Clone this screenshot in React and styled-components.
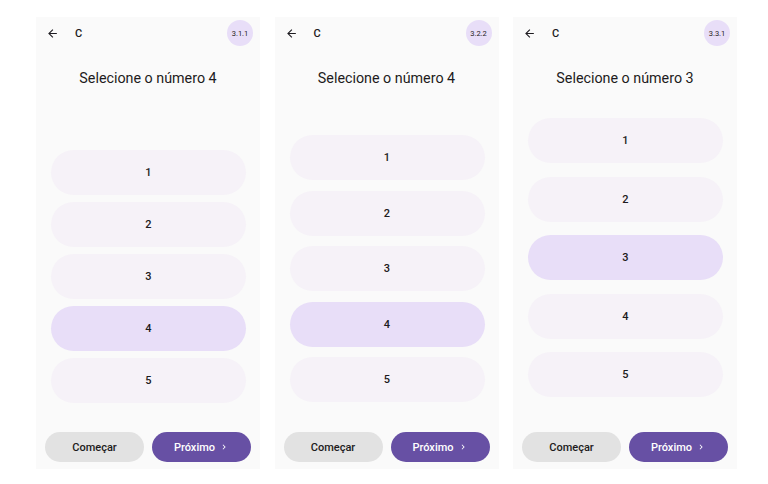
import React from "react";
import styled, { createGlobalStyle } from "styled-components";

const GlobalStyle = createGlobalStyle`
  body {
    margin: 0;
    background: #ffffff;
    font-family: Roboto, "Noto Sans", sans-serif;
  }
`;

const Page = styled.div`
  display: flex;
  gap: 14.5px;
  padding: 17px 0 0 36px;
  height: 484px;
  box-sizing: border-box;
`;

const Panel = styled.section`
  width: 224px;
  height: 452px;
  background: #fafafa;
  display: flex;
  flex-direction: column;
  box-sizing: border-box;
`;

const TopBar = styled.div`
  height: 32px;
  display: flex;
  align-items: center;
  padding: 0 7px 0 10px;
`;

const BackButton = styled.span`
  width: 13px;
  height: 13px;
  display: flex;
  align-items: center;
  justify-content: center;
  color: #1d1b20;
`;

const Letter = styled.span`
  margin-left: 16px;
  font-size: 11px;
  font-weight: 500;
  color: #1d1b20;
`;

const Badge = styled.span`
  margin-left: auto;
  width: 26px;
  height: 26px;
  border-radius: 50%;
  background: #e8def8;
  color: #1d1b20;
  font-size: 7.5px;
  display: flex;
  align-items: center;
  justify-content: center;
`;

const Title = styled.h1`
  margin: 19px 0 0;
  font-size: 14.3px;
  line-height: 20px;
  font-weight: 400;
  text-align: center;
  color: #1d1b20;
`;

const Options = styled.div`
  display: flex;
  flex-direction: column;
  padding: ${(p) => p.$top}px 14px 0 15px;
  gap: ${(p) => p.$gap}px;
`;

const Option = styled.div`
  height: 45px;
  border-radius: 23px;
  background: ${(p) => (p.$selected ? "#e8def8" : "#f6f2f8")};
  display: flex;
  align-items: center;
  justify-content: center;
  font-size: 11px;
  font-weight: 500;
  color: #1d1b20;
`;

const Footer = styled.div`
  margin-top: auto;
  display: flex;
  gap: 8px;
  padding: 0 9px 7px;
`;

const Button = styled.button`
  flex: 1;
  height: 30px;
  border: none;
  border-radius: 15px;
  font-family: Roboto, "Noto Sans", sans-serif;
  font-size: 11px;
  font-weight: 500;
  display: flex;
  align-items: center;
  justify-content: center;
  gap: 4px;
  background: ${(p) => (p.$primary ? "#6750a4" : "#e2e2e2")};
  color: ${(p) => (p.$primary ? "#ffffff" : "#1d1b20")};
`;

const ArrowBack = () => (
  <svg width="13" height="13" viewBox="0 0 24 24">
    <path d="M20 11H7.83l5.59-5.59L12 4l-8 8 8 8 1.41-1.41L7.83 13H20v-2z" fill="currentColor" />
  </svg>
);

const Chevron = () => (
  <svg width="10" height="10" viewBox="0 0 24 24">
    <path d="M8.59 16.59 13.17 12 8.59 7.41 10 6l6 6-6 6z" fill="currentColor" />
  </svg>
);

const screens = [
  { code: "3.1.1", target: 4, top: 62, gap: 7 },
  { code: "3.2.2", target: 4, top: 47, gap: 10.5 },
  { code: "3.3.1", target: 3, top: 30, gap: 13.5 },
];

const Screen = ({ code, target, top, gap }) => (
  <Panel>
    <TopBar>
      <BackButton>
        <ArrowBack />
      </BackButton>
      <Letter>C</Letter>
      <Badge>{code}</Badge>
    </TopBar>
    <Title>Selecione o número {target}</Title>
    <Options $top={top} $gap={gap}>
      {[1, 2, 3, 4, 5].map((n) => (
        <Option key={n} $selected={n === target}>
          {n}
        </Option>
      ))}
    </Options>
    <Footer>
      <Button>Começar</Button>
      <Button $primary>
        Próximo <Chevron />
      </Button>
    </Footer>
  </Panel>
);

export default function App() {
  return (
    <>
      <GlobalStyle />
      <Page>
        {screens.map((s) => (
          <Screen key={s.code} {...s} />
        ))}
      </Page>
    </>
  );
}
